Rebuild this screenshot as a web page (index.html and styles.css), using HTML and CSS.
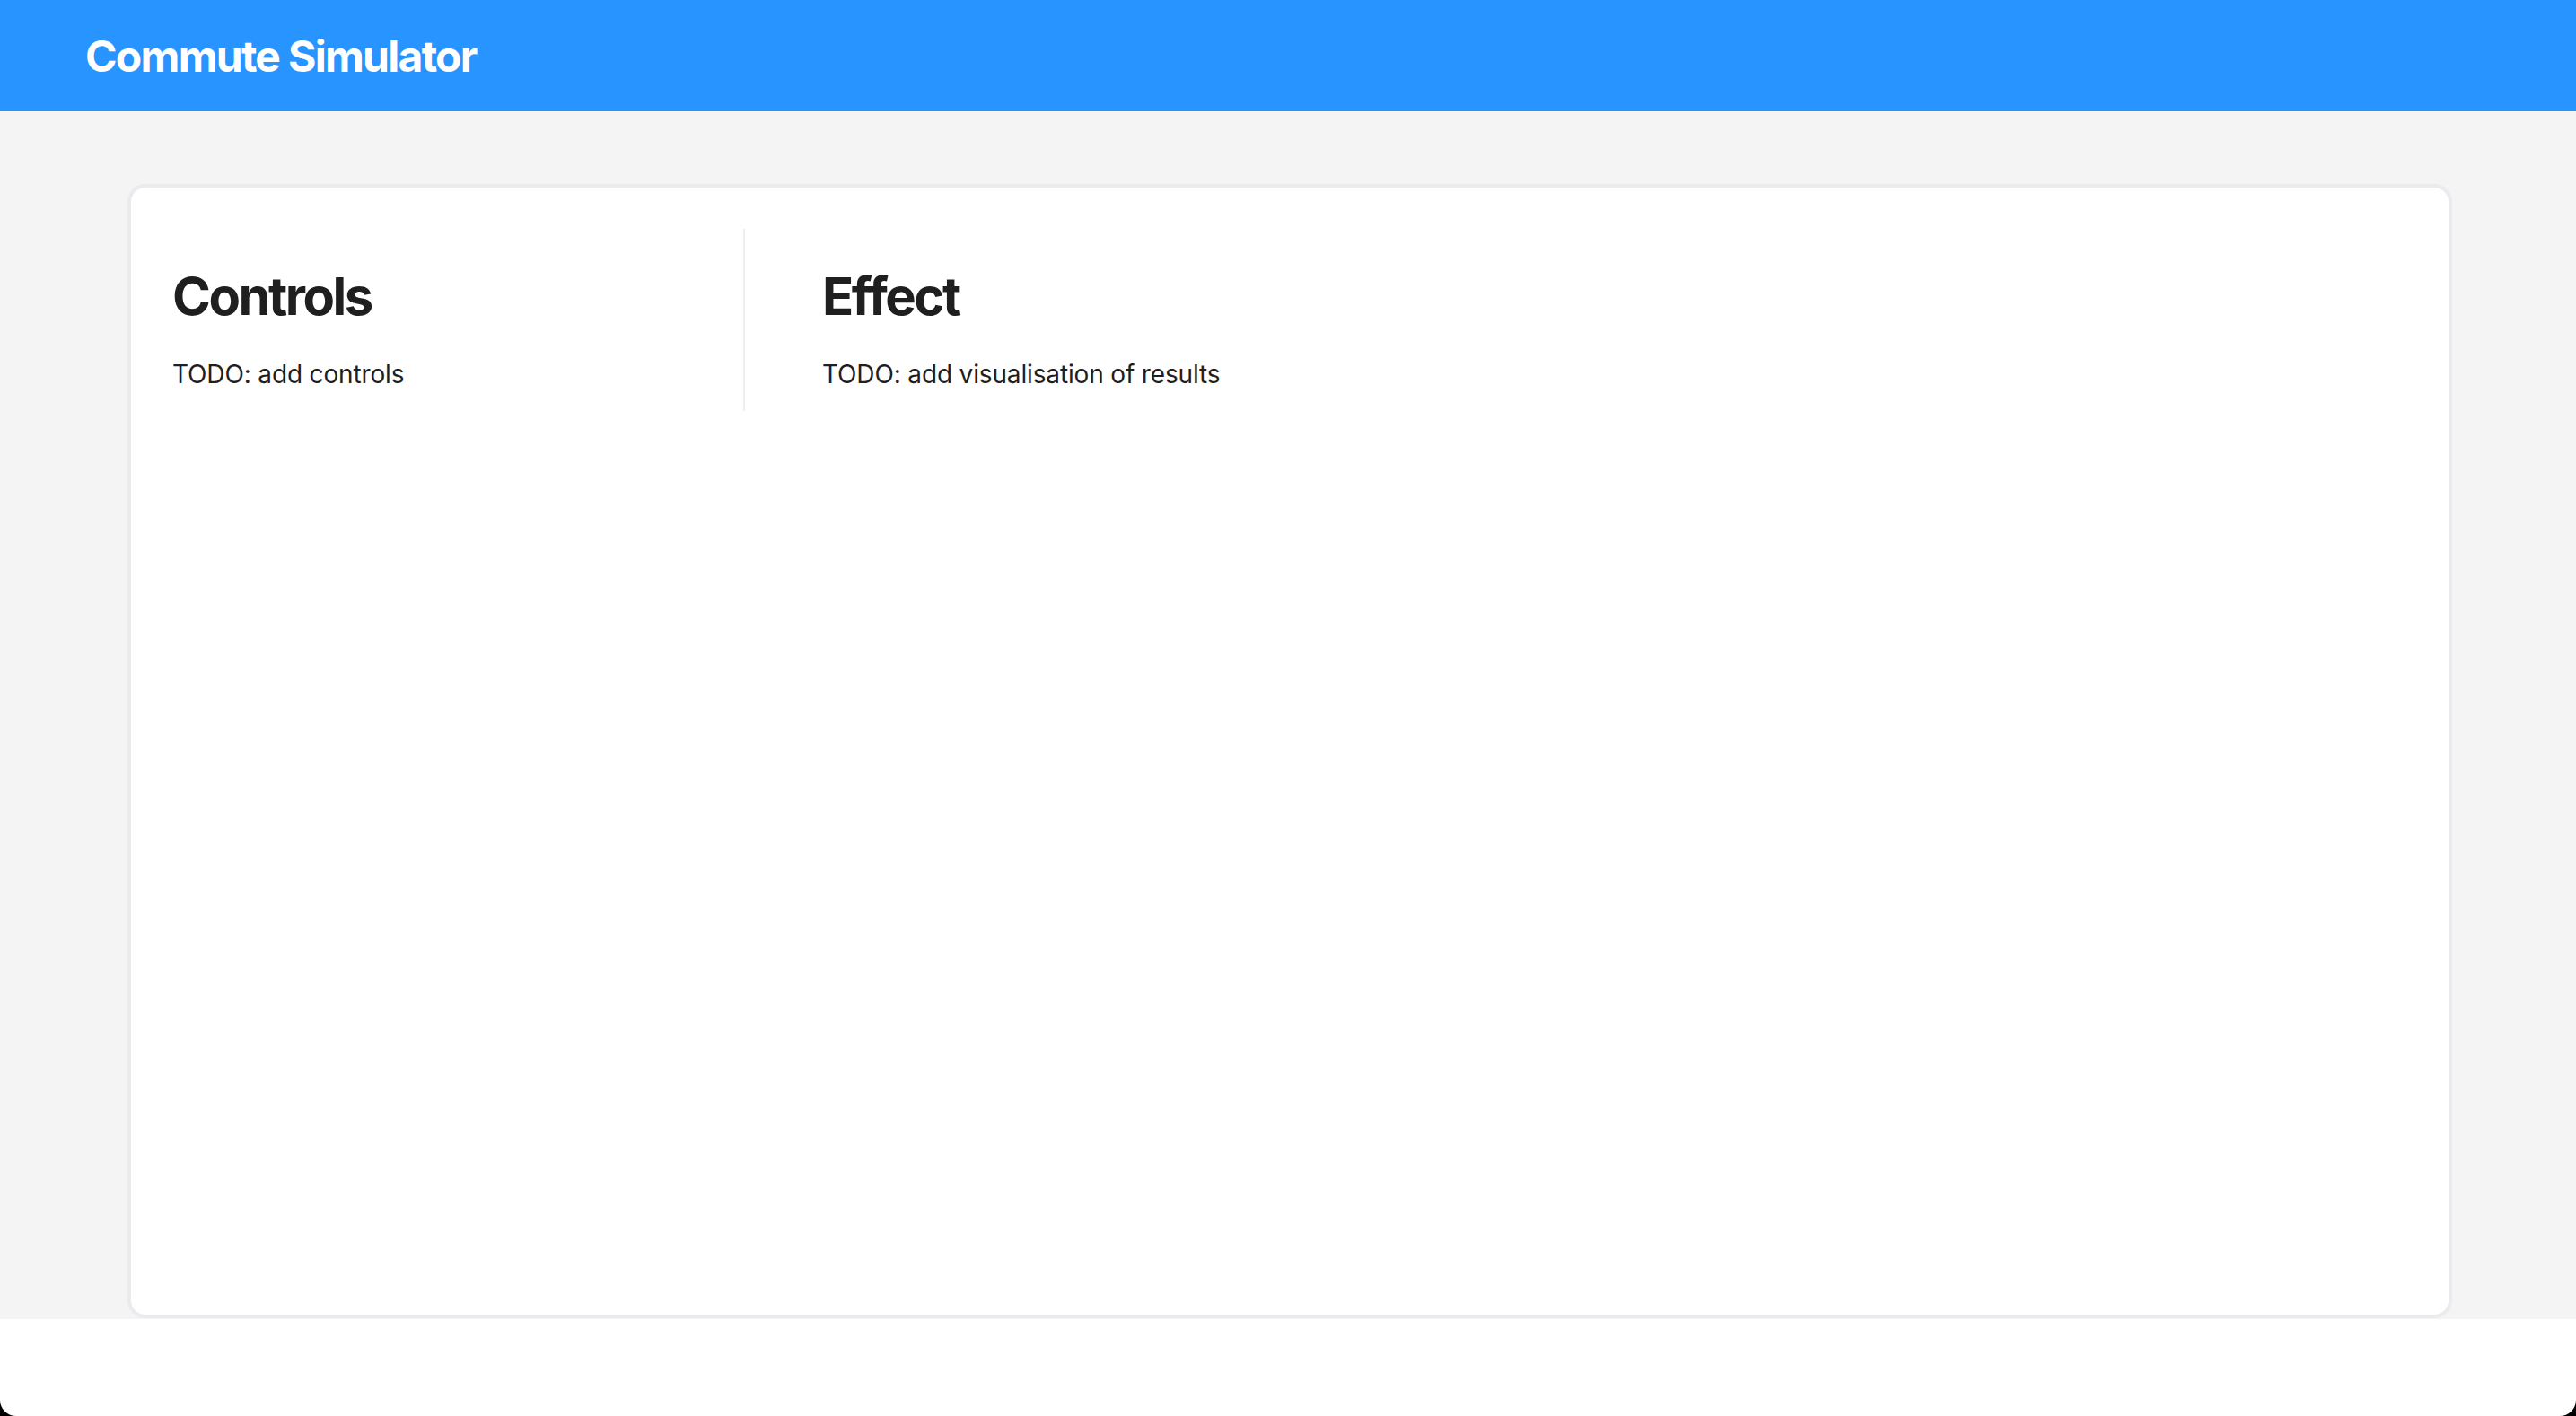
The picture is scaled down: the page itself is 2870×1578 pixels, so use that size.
FILE: index.html
```html
<!DOCTYPE html>
<html lang="en">
<head>
<meta charset="utf-8">
<title>Commute Simulator</title>
<link rel="stylesheet" href="styles.css">
</head>
<body>
<div class="page">
  <header class="topbar">
    <h1 class="brand">Commute Simulator</h1>
  </header>
  <main class="main">
    <section class="card">
      <div class="col col-controls">
        <h2 class="col-title">Controls</h2>
        <p class="col-text">TODO: add controls</p>
      </div>
      <div class="col col-effect">
        <h2 class="col-title">Effect</h2>
        <p class="col-text">TODO: add visualisation of results</p>
      </div>
    </section>
  </main>
</div>
</body>
</html>
```

FILE: styles.css
```css
html {
  background: #000;
}
body {
  margin: 0;
  font-family: Inter, "Noto Sans", "Liberation Sans", sans-serif;
  color: #1f1f1f;
}
.page {
  min-height: 1578px;
  background: #fff;
  border-radius: 0 0 18px 18px;
  overflow: hidden;
}
.topbar {
  height: 124px;
  background: #2894ff;
  display: flex;
  align-items: center;
  padding-left: 95px;
}
.brand {
  margin: 0;
  font-size: 48px;
  font-weight: 700;
  color: #fff;
  letter-spacing: -1.7px;
}
.main {
  height: 1346px;
  box-sizing: border-box;
  background: #f4f4f4;
  padding-top: 81px;
}
.card {
  box-sizing: border-box;
  margin-left: 142px;
  width: 2590px;
  height: 1264px;
  background: #fff;
  border: 4px solid #ebebef;
  border-radius: 20px;
  padding: 46px;
  display: flex;
  align-items: flex-start;
}
.col-controls {
  width: 638px;
  box-sizing: border-box;
  border-right: 2px solid #eeeeee;
  flex: none;
}
.col-effect {
  padding-left: 86px;
}
.col-title {
  margin: 39px 0 0;
  font-size: 58px;
  line-height: 72px;
  font-weight: 700;
  letter-spacing: -2.5px;
  color: #1f1f1f;
}
.col-text {
  margin: 34px 0 24px;
  font-size: 28px;
  line-height: 34px;
  letter-spacing: -0.15px;
  color: #1f1f1f;
}
```
